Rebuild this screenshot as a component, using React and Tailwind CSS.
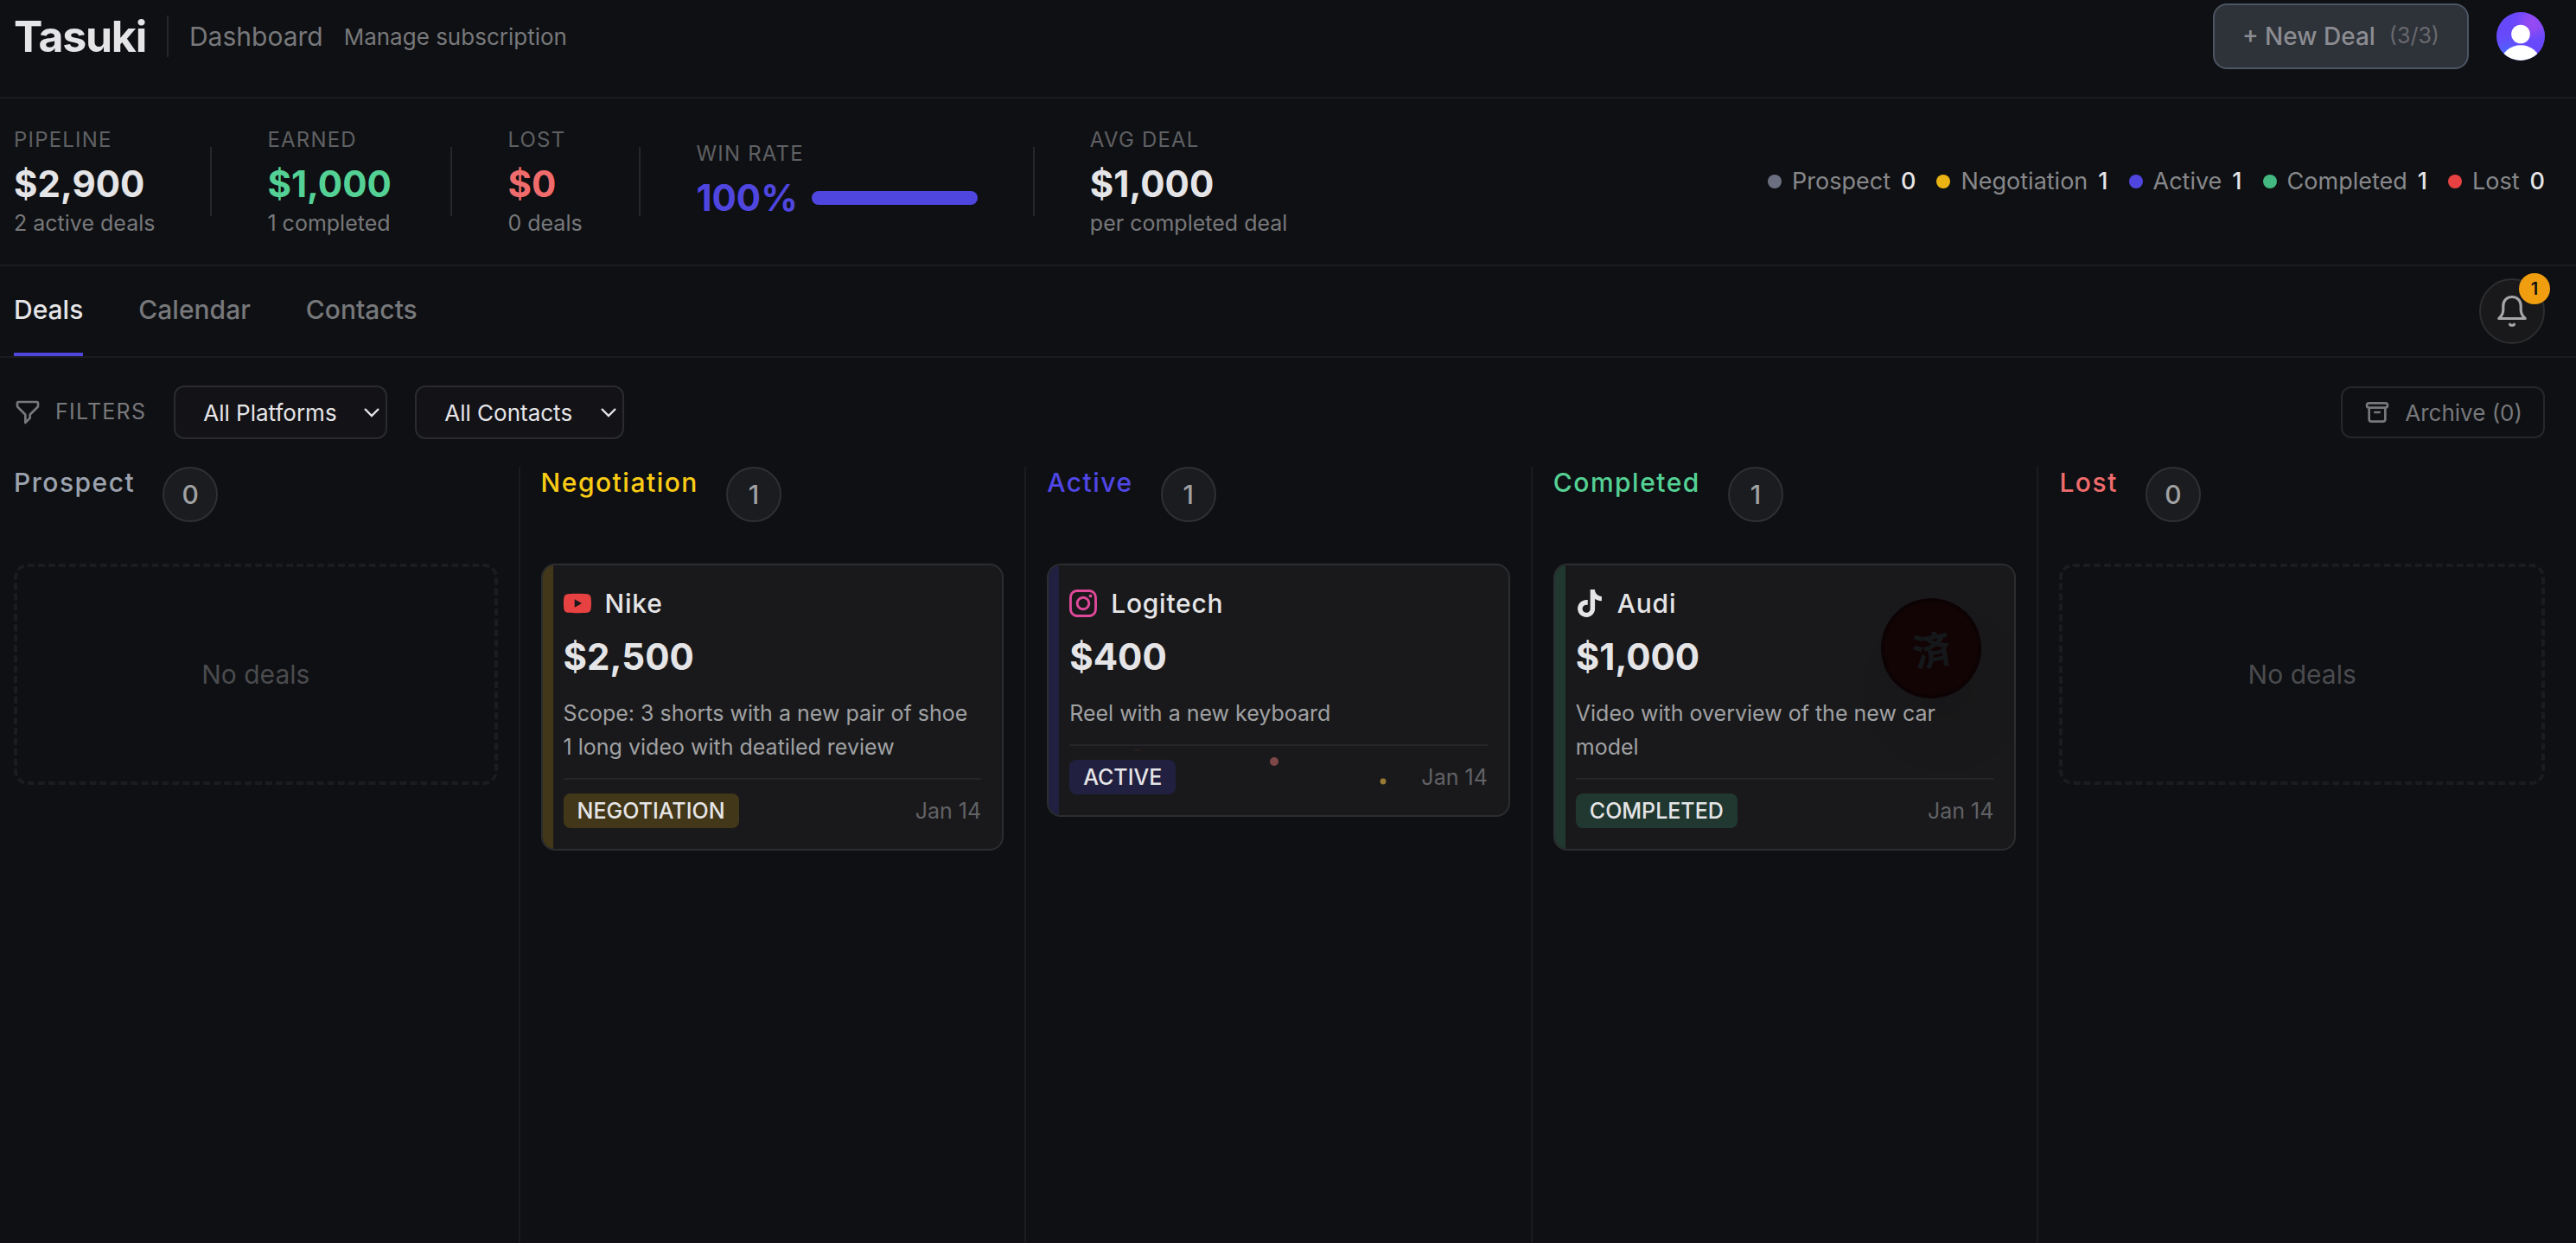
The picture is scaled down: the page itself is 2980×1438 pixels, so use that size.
import { useState } from "react";
import { SiInstagram, SiTiktok, SiYoutube } from "react-icons/si";

const TABS = ["Deals", "Calendar", "Contacts"];

const SUMMARY = [
  { name: "Prospect", count: 0, dot: "bg-[#6b7080]" },
  { name: "Negotiation", count: 1, dot: "bg-[#eab414]" },
  { name: "Active", count: 1, dot: "bg-[#4f46e0]" },
  { name: "Completed", count: 1, dot: "bg-[#43b880]" },
  { name: "Lost", count: 0, dot: "bg-[#e84141]" },
];

const COLUMNS = [
  { name: "Prospect", color: "text-[#9ca3af]", deals: [] },
  {
    name: "Negotiation",
    color: "text-[#facc15]",
    tint: "bg-[#423718]",
    deals: [
      {
        brand: "Nike",
        icon: <SiYoutube className="size-8 text-[#e84141]" aria-hidden="true" />,
        amount: "$2,500",
        lines: ["Scope: 3 shorts with a new pair of shoe", "1 long video with deatiled review"],
        date: "Jan 14",
      },
    ],
  },
  {
    name: "Active",
    color: "text-[#4f46e5]",
    tint: "bg-[#222040]",
    deals: [
      {
        brand: "Logitech",
        icon: <SiInstagram className="size-8 text-[#e0489a]" aria-hidden="true" />,
        amount: "$400",
        lines: ["Reel with a new keyboard"],
        date: "Jan 14",
        sparks: true,
      },
    ],
  },
  {
    name: "Completed",
    color: "text-[#54d195]",
    tint: "bg-[#213830]",
    deals: [
      {
        brand: "Audi",
        icon: <SiTiktok className="size-8 text-[#e5e5e7]" aria-hidden="true" />,
        amount: "$1,000",
        lines: ["Video with overview of the new car", "model"],
        date: "Jan 14",
        stamp: true,
      },
    ],
  },
  { name: "Lost", color: "text-[#f06c6c]", deals: [] },
];

function FunnelIcon() {
  return (
    <svg viewBox="0 0 24 24" className="size-8" fill="none" stroke="currentColor" strokeWidth="2" strokeLinecap="round" strokeLinejoin="round" aria-hidden="true">
      <path d="M3 4a1 1 0 011-1h16a1 1 0 011 1v2.586a1 1 0 01-.293.707l-6.414 6.414a1 1 0 00-.293.707V17l-4 4v-6.586a1 1 0 00-.293-.707L3.293 7.293A1 1 0 013 6.586V4z" />
    </svg>
  );
}

function ArchiveIcon() {
  return (
    <svg viewBox="0 0 24 24" className="size-8" fill="none" stroke="currentColor" strokeWidth="2" strokeLinecap="round" strokeLinejoin="round" aria-hidden="true">
      <path d="M5 8h14M5 8a2 2 0 110-4h14a2 2 0 110 4M5 8v10a2 2 0 002 2h10a2 2 0 002-2V8m-9 4h4" />
    </svg>
  );
}

function BellIcon() {
  return (
    <svg viewBox="0 0 40 40" className="size-10" fill="none" stroke="currentColor" strokeWidth="3.2" strokeLinecap="round" strokeLinejoin="round" aria-hidden="true">
      <path d="M20 3.5c-5.900 0-10.200 4.300-10.200 10v4.500c0 5-1.500 7.500-5 10.500h30.400c-3.500-3-5-5.500-5-10.500v-4.500c0-5.700-4.300-10-10.200-10z" />
      <path d="M17.500 35.300c1.300 1.400 3.700 1.400 5 0" />
    </svg>
  );
}

function Avatar() {
  return (
    <svg viewBox="0 0 56 56" className="size-14" aria-hidden="true">
      <defs>
        <radialGradient id="violet" cx="0.75" cy="0.22" r="0.45">
          <stop offset="0" stopColor="#9a4af2" />
          <stop offset="0.4" stopColor="#8a4af4" />
          <stop offset="1" stopColor="#6c47ff" stopOpacity="0" />
        </radialGradient>
        <radialGradient id="blue" cx="0.2" cy="0.8" r="0.45">
          <stop offset="0" stopColor="#4a66fb" />
          <stop offset="1" stopColor="#6c47ff" stopOpacity="0" />
        </radialGradient>
        <clipPath id="round">
          <circle cx="28" cy="28" r="28" />
        </clipPath>
      </defs>
      <g clipPath="url(#round)">
        <rect width="56" height="56" fill="#6749fb" />
        <rect width="56" height="56" fill="url(#violet)" />
        <rect width="56" height="56" fill="url(#blue)" />
        <circle cx="28" cy="25.500" r="10.800" fill="#fff" />
        <ellipse cx="28" cy="57" rx="22" ry="18.800" fill="#fff" />
      </g>
    </svg>
  );
}

function StatLabel({ children }) {
  return <p className="text-[24px] leading-8 tracking-wider text-[#5f6063] uppercase">{children}</p>;
}

function Stat({ label, value, note, color, width = "" }) {
  return (
    <div className={width}>
      <StatLabel>{label}</StatLabel>
      <p className={`mt-2.5 text-[42px] leading-[50px] font-bold ${color}`}>{value}</p>
      <p className="mt-1 text-[25px] leading-8 text-[#77787b]">{note}</p>
    </div>
  );
}

function Rule() {
  return <div className="h-20 w-0.5 bg-[#26272a]" />;
}

function FilterSelect({ label, width }) {
  return (
    <div className="relative">
      <select
        aria-label={label}
        className={`h-[62px] appearance-none rounded-xl border-2 border-[#2a2b2e] bg-[#131217] pl-8 text-[26px] text-[#e5e5e7] ${width}`}
      >
        <option>{label}</option>
      </select>
      <svg viewBox="0 0 20 12" className="pointer-events-none absolute top-1/2 right-2 w-5 -translate-y-1/2 text-[#e5e5e7]" fill="none" stroke="currentColor" strokeWidth="2.4" aria-hidden="true">
        <path d="M2 2l8 8 8-8" />
      </svg>
    </div>
  );
}

function Sparks() {
  return (
    <svg viewBox="0 0 300 60" className="pointer-events-none absolute top-[213px] left-24 h-[60px] w-[300px]" aria-hidden="true">
      <path d="M2 0h9a5 3 0 0 1-9 0z" fill="#2f221c" />
      <circle cx="165" cy="14" r="5" fill="#7d4747" />
      <circle cx="291" cy="37" r="3.400" fill="#997a35" />
    </svg>
  );
}

function Stamp() {
  return (
    <div className="absolute top-[38px] right-[38px] flex size-[116px] -rotate-10 items-center justify-center rounded-full border-4 border-[#0d0304] bg-[#120405] font-['Noto_Sans_CJK_JP',sans-serif] text-[44px] leading-none font-bold text-[#15181a] shadow-[8px_50px_60px_rgba(0,0,0,0.06)]">
      済
    </div>
  );
}

function DealCard({ deal, status, tint }) {
  return (
    <article className="relative flex overflow-hidden rounded-2xl border-2 border-[#2c2d2f] bg-[#19191b]">
      <div className={`w-3 shrink-0 ${tint}`} />
      {deal.stamp && <Stamp />}
      {deal.sparks && <Sparks />}
      <div className="relative min-w-0 flex-1 py-6 pr-6 pl-3">
        <h3 className="flex h-10 items-center gap-4 text-[30px] font-medium tracking-wide text-[#e5e5e7]">
          {deal.icon}
          {deal.brand}
        </h3>
        <p className="mt-4 text-[42px] leading-[52px] font-bold text-[#e5e5e7]">{deal.amount}</p>
        <div className="mt-5 text-[25px] leading-[39px] text-[#a0a1a3]">
          {deal.lines.map((line) => (
            <p key={line}>{line}</p>
          ))}
        </div>
        <div className="mt-4 flex items-center justify-between border-t-2 border-[#252628] pt-4">
          <span className={`rounded-lg px-4 text-[25px] leading-10 font-medium text-[#e5e5e7] uppercase ${tint}`}>{status}</span>
          <time className="text-[25px] leading-10 text-[#616265]">{deal.date}</time>
        </div>
      </div>
    </article>
  );
}

function Column({ column }) {
  return (
    <section className="min-w-0 border-r-2 border-[#1a1b1e] px-6 first:pl-0 last:border-r-0 last:pr-0">
      <header className="mb-12 flex items-start gap-8">
        <h2 className={`text-[30px] leading-9 font-medium tracking-wider ${column.color}`}>{column.name}</h2>
        <span className="flex size-16 items-center justify-center rounded-full border-2 border-[#2f3032] bg-[#1b1c1f] text-[30px] font-medium text-[#a0a1a3]">
          {column.deals.length}
        </span>
      </header>
      {column.deals.length === 0 ? (
        <div className="flex h-64 items-center justify-center rounded-2xl border-4 border-dashed border-[#1b1c1f] text-[30px] text-[#4a4b4e]">
          No deals
        </div>
      ) : (
        column.deals.map((deal) => <DealCard key={deal.brand} deal={deal} status={column.name} tint={column.tint} />)
      )}
    </section>
  );
}

export default function App() {
  const [tab, setTab] = useState("Deals");
  return (
    <div className="flex min-h-screen flex-col bg-[#0f1013] font-['Inter',sans-serif] text-[#e5e5e7]">
      <header className="flex items-center justify-between border-b-2 border-[#1b1c1f] pt-1 pr-9 pb-8 pl-4">
        <div className="flex items-center">
          <span className="text-[50px] leading-none font-bold tracking-tight">Tasuki</span>
          <div className="mx-6 h-12 w-0.5 bg-[#26272a]" />
          <nav className="flex items-center gap-6 text-[#77787b]">
            <a href="#dashboard" className="text-[30px]">Dashboard</a>
            <a href="#subscription" className="text-[26px]">Manage subscription</a>
          </nav>
        </div>
        <div className="flex items-center gap-8">
          <button type="button" className="flex h-[76px] items-center gap-4 rounded-2xl border-2 border-[#4b5563] bg-[#2e3239] px-8 text-[28px] font-medium text-[#8b8c91]">
            + New Deal <span className="text-[25px] font-normal text-[#68696e]">(3/3)</span>
          </button>
          <button type="button" aria-label="Account">
            <Avatar />
          </button>
        </div>
      </header>

      <section className="flex h-[194px] items-center justify-between border-b-2 border-[#1b1c1f] pr-9 pl-4">
        <div className="flex items-center gap-16">
          <Stat label="Pipeline" value="$2,900" note="2 active deals" color="text-[#e5e5e7]" />
          <Rule />
          <Stat label="Earned" value="$1,000" note="1 completed" color="text-[#54d195]" width="min-w-37" />
          <Rule />
          <Stat label="Lost" value="$0" note="0 deals" color="text-[#f06c6c]" width="min-w-22" />
          <Rule />
          <div className="pb-1">
            <StatLabel>Win rate</StatLabel>
            <div className="mt-2.5 flex items-center gap-4">
              <span className="text-[42px] leading-[50px] font-bold text-[#4f46e0]">100%</span>
              <div className="h-4 w-48 rounded-full bg-[#4f46e0]" />
            </div>
          </div>
          <Rule />
          <Stat label="Avg deal" value="$1,000" note="per completed deal" color="text-[#e5e5e7]" />
        </div>
        <ul className="flex items-center gap-6 text-[27px] text-[#87888b]">
          {SUMMARY.map((item) => (
            <li key={item.name} className="flex items-center gap-3">
              <span className={`size-4 rounded-full ${item.dot}`} />
              {item.name}
              <span className="font-medium text-[#e5e5e7]">{item.count}</span>
            </li>
          ))}
        </ul>
      </section>

      <div className="flex h-[106px] items-center justify-between border-b-2 border-[#1b1c1f] pr-9 pl-4">
        <nav className="flex h-full gap-16">
          {TABS.map((name) => (
            <button
              key={name}
              type="button"
              onClick={() => setTab(name)}
              className={`border-b-4 text-[30px] font-medium ${name === tab ? "border-[#4f46e0] text-[#e5e5e7]" : "border-transparent text-[#77787b]"}`}
            >
              {name}
            </button>
          ))}
        </nav>
        <button type="button" aria-label="Notifications" className="relative flex size-[76px] items-center justify-center rounded-full border-2 border-[#2c2d2f] bg-[#19191b] text-[#a5a5a7]">
          <BellIcon />
          <span className="absolute -top-2 -right-2 flex size-9 items-center justify-center rounded-full bg-[#f09e10] text-[20px] font-semibold text-[#0f1013]">1</span>
        </button>
      </div>

      <div className="flex items-center justify-between py-8 pr-9 pl-4">
        <div className="flex items-center gap-8">
          <div className="flex items-center gap-4 text-[25px] tracking-wider text-[#77787b] uppercase">
            <FunnelIcon />
            Filters
          </div>
          <FilterSelect label="All Platforms" width="w-[247px]" />
          <FilterSelect label="All Contacts" width="w-[242px]" />
        </div>
        <button type="button" className="flex h-15 items-center gap-4 rounded-xl border-2 border-[#26272a] px-6 text-[26px] text-[#77787b]">
          <ArchiveIcon />
          Archive (0)
        </button>
      </div>

      <main className="grid flex-1 grid-cols-5 pr-9 pl-4">
        {COLUMNS.map((column) => (
          <Column key={column.name} column={column} />
        ))}
      </main>
    </div>
  );
}
